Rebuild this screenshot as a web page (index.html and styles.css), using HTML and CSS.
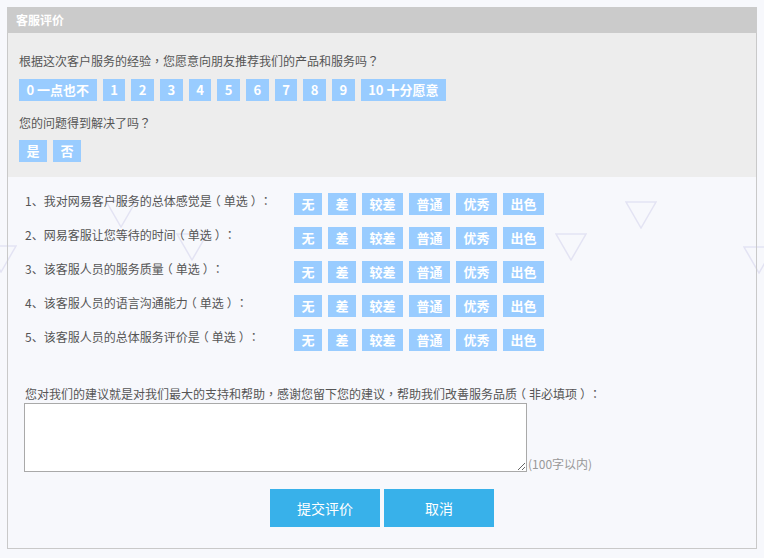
FILE: index.html
```html
<!DOCTYPE html>
<html lang="zh-CN">
<head>
<meta charset="utf-8">
<title>客服评价</title>
<link rel="stylesheet" href="styles.css">
</head>
<body>
<div class="deco" aria-hidden="true">
  <svg class="tri t1" viewBox="0 0 32 28"><path d="M1 1H31L16 27Z"/></svg>
  <svg class="tri t2" viewBox="0 0 32 28"><path d="M1 1H31L16 27Z"/></svg>
  <svg class="tri t3" viewBox="0 0 32 28"><path d="M1 1H31L16 27Z"/></svg>
  <svg class="tri t4" viewBox="0 0 32 28"><path d="M1 1H31L16 27Z"/></svg>
  <svg class="tri t5" viewBox="0 0 32 28"><path d="M1 1H31L16 27Z"/></svg>
  <svg class="tri t6" viewBox="0 0 32 28"><path d="M1 1H31L16 27Z"/></svg>
</div>
<div class="panel">
  <div class="panel-head">客服评价</div>
  <div class="quick">
    <p class="q">根据这次客户服务的经验<span class="pc">，</span>您愿意向朋友推荐我们的产品和服务吗<span class="pc">？</span></p>
    <div class="btns">
      <span class="opt">0 一点也不</span>
      <span class="opt">1</span>
      <span class="opt">2</span>
      <span class="opt">3</span>
      <span class="opt">4</span>
      <span class="opt">5</span>
      <span class="opt">6</span>
      <span class="opt">7</span>
      <span class="opt">8</span>
      <span class="opt">9</span>
      <span class="opt">10 十分愿意</span>
    </div>
    <p class="q q2">您的问题得到解决了吗<span class="pc">？</span></p>
    <div class="btns btns2">
      <span class="opt">是</span>
      <span class="opt">否</span>
    </div>
  </div>
  <div class="detail">
    <div class="rows">
      <div class="row">
        <span class="label">1、我对网易客户服务的总体感觉是<span class="pc">（</span>单选<span class="pc">）</span><span class="pc">：</span></span>
        <div class="btns"><span class="opt">无</span><span class="opt">差</span><span class="opt">较差</span><span class="opt">普通</span><span class="opt">优秀</span><span class="opt">出色</span></div>
      </div>
      <div class="row">
        <span class="label">2、网易客服让您等待的时间<span class="pc">（</span>单选<span class="pc">）</span><span class="pc">：</span></span>
        <div class="btns"><span class="opt">无</span><span class="opt">差</span><span class="opt">较差</span><span class="opt">普通</span><span class="opt">优秀</span><span class="opt">出色</span></div>
      </div>
      <div class="row">
        <span class="label">3、该客服人员的服务质量<span class="pc">（</span>单选<span class="pc">）</span><span class="pc">：</span></span>
        <div class="btns"><span class="opt">无</span><span class="opt">差</span><span class="opt">较差</span><span class="opt">普通</span><span class="opt">优秀</span><span class="opt">出色</span></div>
      </div>
      <div class="row">
        <span class="label">4、该客服人员的语言沟通能力<span class="pc">（</span>单选<span class="pc">）</span><span class="pc">：</span></span>
        <div class="btns"><span class="opt">无</span><span class="opt">差</span><span class="opt">较差</span><span class="opt">普通</span><span class="opt">优秀</span><span class="opt">出色</span></div>
      </div>
      <div class="row">
        <span class="label">5、该客服人员的总体服务评价是<span class="pc">（</span>单选<span class="pc">）</span><span class="pc">：</span></span>
        <div class="btns"><span class="opt">无</span><span class="opt">差</span><span class="opt">较差</span><span class="opt">普通</span><span class="opt">优秀</span><span class="opt">出色</span></div>
      </div>
    </div>
    <p class="suggest">您对我们的建议就是对我们最大的支持和帮助<span class="pc">，</span>感谢您留下您的建议<span class="pc">，</span>帮助我们改善服务品质<span class="pc">（</span>非必填项<span class="pc">）</span><span class="pc">：</span></p>
    <div class="note-wrap">
      <textarea class="note"></textarea>
      <span class="limit">(100字以内)</span>
    </div>
    <div class="actions">
      <button class="act" type="button">提交评价</button>
      <button class="act" type="button">取消</button>
    </div>
  </div>
</div>
</body>
</html>
```

FILE: styles.css
```css
html, body {
  margin: 0;
  padding: 0;
}
body {
  background: #f7f8fc;
  font-family: "Noto Sans CJK SC", "Noto Sans", "Liberation Sans", sans-serif;
  font-size: 12px;
  color: #555;
  position: relative;
  width: 764px;
  height: 558px;
  overflow: hidden;
  text-spacing-trim: space-all;
}
.pc {
  font-family: "Noto Sans CJK TC", "Noto Sans CJK SC", sans-serif;
  font-feature-settings: "halt" 1;
  display: inline-block;
  width: 12px;
  text-align: center;
}
.deco {
  position: absolute;
  left: 0;
  top: 0;
  width: 764px;
  height: 558px;
  z-index: 0;
}
.tri {
  position: absolute;
  width: 32px;
  height: 28px;
  fill: none;
  stroke: #e3e3f3;
  stroke-width: 1.5;
}
.t1 { left: 105px; top: 200px; }
.t2 { left: 176px; top: 233px; }
.t3 { left: 555px; top: 233px; }
.t4 { left: 625px; top: 201px; }
.t5 { left: 743px; top: 246px; }
.t6 { left: -15px; top: 245px; }

.panel {
  position: relative;
  z-index: 1;
  margin: 7px 0 0 7px;
  width: 748px;
  border: 1px solid #c9c9c9;
  border-top: 0;
}
.panel-head {
  height: 26px;
  line-height: 26px;
  background: #cbcbcb;
  color: #fff;
  font-weight: bold;
  padding-left: 9px;
  margin: 0 -1px;
}
.quick {
  background: #ededed;
  padding: 19px 11px 15px;
}
.q {
  margin: 0;
  line-height: 18px;
}
.q2 {
  margin-top: 13px;
}
.btns {
  display: flex;
  gap: 6px;
  margin-top: 9px;
}
.btns2 {
  margin-top: 8px;
}
.opt {
  display: block;
  height: 22px;
  line-height: 22px;
  padding: 0 7.5px;
  background: #99ccff;
  color: #fff;
  font-weight: bold;
  font-size: 13px;
  white-space: nowrap;
}
.detail {
  padding: 16px 0 21px 16px;
}
.rows {
  display: flex;
  flex-direction: column;
  gap: 12px;
}
.row {
  display: flex;
  align-items: flex-start;
}
.label {
  width: 269px;
  padding-left: 1px;
  line-height: 16px;
}
.row .btns {
  margin-top: 0;
}
.suggest {
  margin: 34px 0 0 1px;
  line-height: 18px;
}
.note-wrap {
  display: flex;
  align-items: flex-end;
}
.note {
  display: block;
  box-sizing: border-box;
  width: 503px;
  height: 69px;
  margin: 0;
  border: 1px solid #a9a9a9;
  background: #fff;
  resize: both;
}
.limit {
  color: #999;
  line-height: 16px;
  padding-left: 1px;
}
.actions {
  display: flex;
  justify-content: center;
  gap: 4px;
  margin: 17px 0 0 -16px;
}
.act {
  width: 110px;
  height: 38px;
  border: 0;
  padding: 0;
  background: #38b1ea;
  color: #fff;
  font-family: inherit;
  font-size: 14px;
}
```
